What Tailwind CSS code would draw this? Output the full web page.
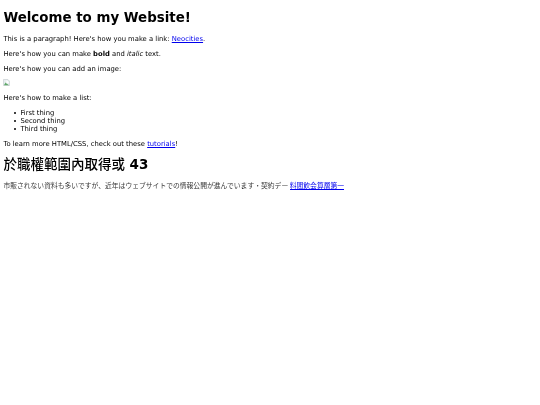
<!DOCTYPE html>
<html lang="en">
<head>
    <meta charset="UTF-8">
    <title>My Website</title>
    <script src="https://cdn.jsdelivr.net/npm/@tailwindcss/browser@4"></script>
</head>
<body class="bg-white text-black font-['DejaVu_Sans','Noto_Sans_CJK_TC',sans-serif] text-[6.8px] leading-[8px]">
  <div class="px-[3.4px] pt-[10px] blur-[0.3px] antialiased">
    <h1 class="text-[13.4px] leading-[16px] font-bold mb-[9px]">Welcome to my Website!</h1>

    <p class="mb-[7px]">This is a paragraph! Here's how you make a link: <a href="#" class="text-[#0000ee] underline underline-offset-1">Neocities</a>.</p>
    <p class="mb-[7px]">Here's how you can make <strong>bold</strong> and <em>italic</em> text.</p>
    <p class="mb-[6px]">Here's how you can add an image:</p>
    <p class="mb-[7px] h-[8px]">
        <svg width="7" height="7" viewBox="0 0 8 8" class="block">
            <path d="M.5.5h5l2 2v5h-7z" fill="#e8eef0" stroke="#b8c0c4" stroke-width=".6"/>
            <path d="M1 7l2-3 1.500 1.500L7 7z" fill="#5fa868"/>
            <path d="M4 1l3 3-3 1z" fill="#fff"/>
        </svg>
    </p>
    <p class="mb-[7px]">Here's how to make a list:</p>
    <ul class="pl-[10.500px] mb-[7px] leading-[8px]">
        <li class="flex items-center gap-[4.500px]"><span class="w-[2px] h-[2px] rounded-full bg-black"></span>First thing</li>
        <li class="flex items-center gap-[4.500px]"><span class="w-[2px] h-[2px] rounded-full bg-black"></span>Second thing</li>
        <li class="flex items-center gap-[4.500px]"><span class="w-[2px] h-[2px] rounded-full bg-black"></span>Third thing</li>
    </ul>
    <p class="mb-[8px]">To learn more HTML/CSS, check out these <a href="#" class="text-[#0000ee] underline underline-offset-1">tutorials</a>!</p>
    <h2 class="text-[13.5px] leading-[16px] font-bold mb-[9px]"><span class="font-medium">於職權範圍內取得或</span> 43</h2>
    <p class="font-['Noto_Sans_CJK_JP','DejaVu_Sans',sans-serif] leading-[8px] text-black/80">市販されない資料も多いですが、近年はウェブサイトでの情報公開が進んでいます・契約デー <a href="#" class="inline-block text-[#0000ee] border-b border-[#0000ee]">料間飲会算層第一</a></p>
  </div>
</body>
</html>
